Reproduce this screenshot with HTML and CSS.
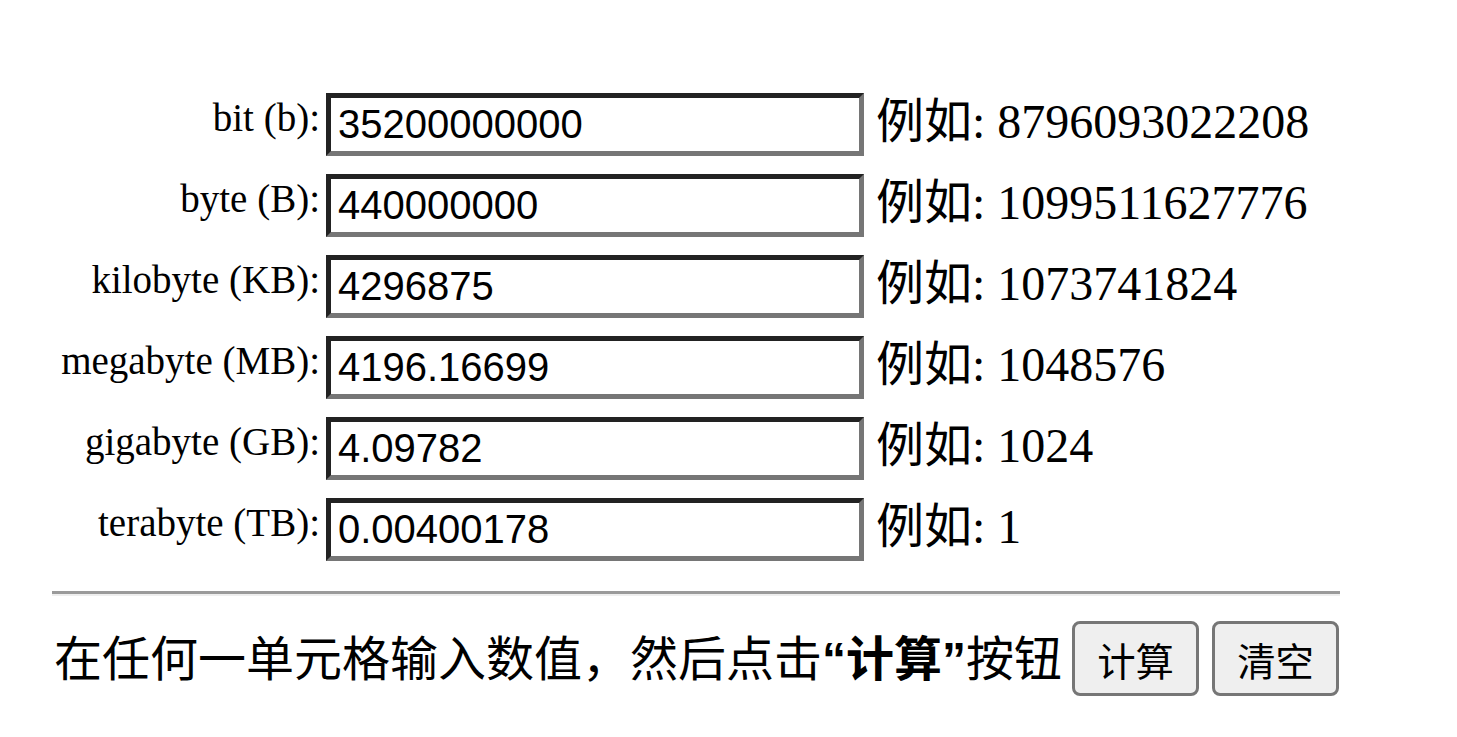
FILE: index.html
```html
<!DOCTYPE html>
<html lang="zh">
<head>
<meta charset="utf-8">
<title>数据存储单位换算</title>
<link rel="stylesheet" href="styles.css">
</head>
<body>
<div class="page">
  <div class="rows">
    <div class="row">
      <label class="lbl">bit (b):</label>
      <input class="field" type="text" value="35200000000">
      <span class="ex">例如: 8796093022208</span>
    </div>
    <div class="row">
      <label class="lbl">byte (B):</label>
      <input class="field" type="text" value="440000000">
      <span class="ex">例如: 1099511627776</span>
    </div>
    <div class="row">
      <label class="lbl">kilobyte (KB):</label>
      <input class="field" type="text" value="4296875">
      <span class="ex">例如: 1073741824</span>
    </div>
    <div class="row">
      <label class="lbl">megabyte (MB):</label>
      <input class="field" type="text" value="4196.16699">
      <span class="ex">例如: 1048576</span>
    </div>
    <div class="row">
      <label class="lbl">gigabyte (GB):</label>
      <input class="field" type="text" value="4.09782">
      <span class="ex">例如: 1024</span>
    </div>
    <div class="row">
      <label class="lbl">terabyte (TB):</label>
      <input class="field" type="text" value="0.00400178">
      <span class="ex">例如: 1</span>
    </div>
  </div>
  <hr class="rule">
  <div class="actions">
    <span class="hint">在任何一单元格输入数值，然后点击<b>“计算”</b>按钮</span>
    <button class="btn btn-calc" type="button">计算</button>
    <button class="btn btn-clear" type="button">清空</button>
  </div>
</div>
</body>
</html>
```

FILE: styles.css
```css
html, body {
  margin: 0;
  padding: 0;
  background: #ffffff;
  color: #000000;
}

.page {
  padding: 93px 0 0 52px;
  width: 1288px;
}

.rows {
  display: flex;
  flex-direction: column;
  gap: 18px;
}

.row {
  display: flex;
  align-items: flex-start;
  height: 63px;
}

.lbl {
  flex-shrink: 0;
  width: 268px;
  text-align: right;
  font-family: "Liberation Serif", "Noto Sans CJK SC", serif;
  font-size: 39px;
  line-height: 42px;
  padding-top: 4px;
  white-space: nowrap;
}

.field {
  flex-shrink: 0;
  box-sizing: border-box;
  width: 538px;
  height: 63px;
  margin: 0 0 0 6px;
  padding: 0 7px;
  border-width: 5px;
  border-style: solid;
  border-color: #222222 #767676 #767676 #222222;
  background: #ffffff;
  font-family: "Liberation Sans", sans-serif;
  font-size: 40px;
  color: #000000;
  outline: none;
}

.ex {
  margin-left: 12px;
  font-family: "Liberation Serif", "Noto Sans CJK SC", serif;
  font-size: 48px;
  line-height: 57px;
  white-space: nowrap;
}

.rule {
  margin: 30px 0 0 0;
  height: 0;
  border: 0;
  border-top: 3px solid #9a9a9a;
  border-bottom: 2px solid #eeeeee;
}

.actions {
  display: flex;
  align-items: baseline;
  margin-top: 24px;
  font-family: "Liberation Sans", "Noto Sans CJK SC", sans-serif;
  font-size: 48px;
}

.hint {
  flex-shrink: 0;
  margin-left: 2px;
  white-space: nowrap;
}

.btn {
  flex-shrink: 0;
  box-sizing: border-box;
  width: 127px;
  height: 75px;
  padding: 2px 0 0 0;
  border: 3px solid #767676;
  border-radius: 8px;
  background: #efefef;
  font-family: "Liberation Sans", "Noto Sans CJK SC", sans-serif;
  font-size: 38.4px;
  color: #000000;
  white-space: nowrap;
}

.btn-calc {
  margin-left: 10px;
}

.btn-clear {
  margin-left: 13px;
}
```
